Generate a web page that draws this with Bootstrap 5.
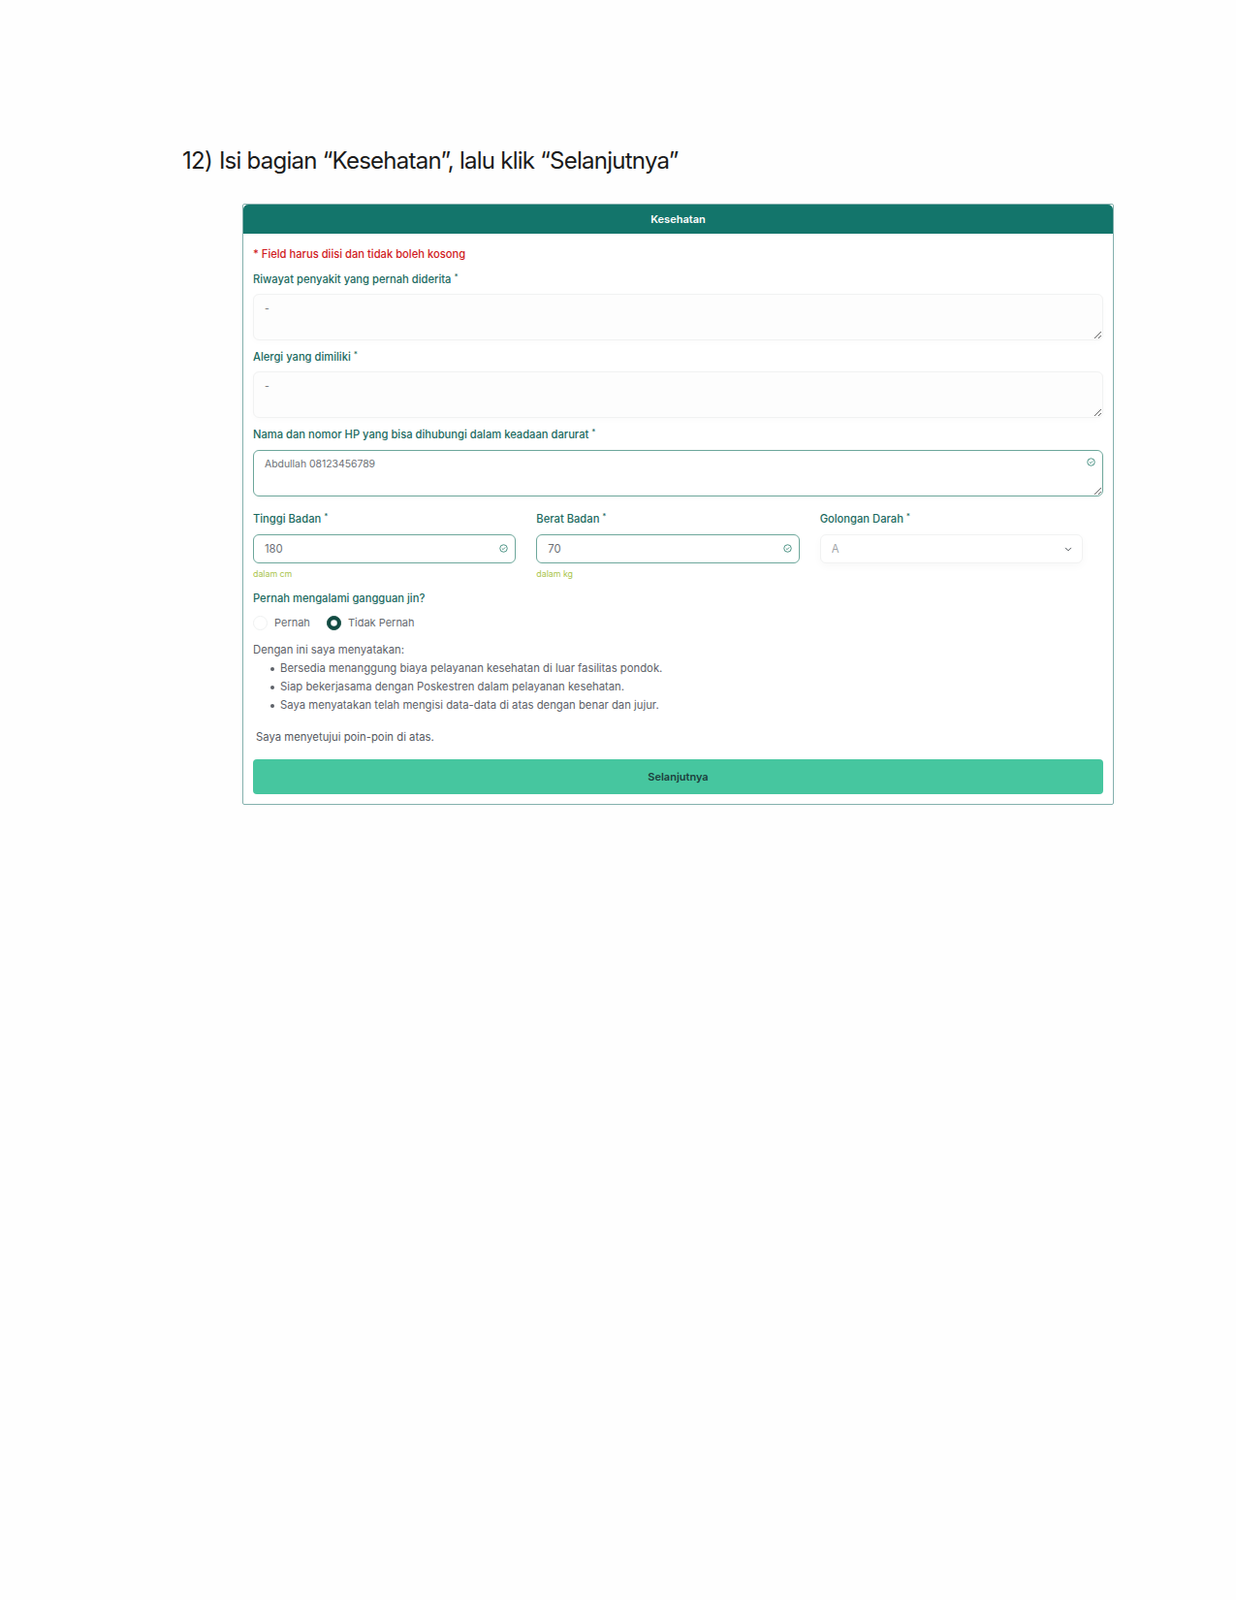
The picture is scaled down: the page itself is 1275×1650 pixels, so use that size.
<!DOCTYPE html>
<html lang="id">
<head>
<meta charset="utf-8">
<title>Kesehatan</title>
<link rel="stylesheet" href="https://cdn.jsdelivr.net/npm/bootstrap@5.3.0/dist/css/bootstrap.min.css">
<style>
body { background: #fefefe; font-family: Inter, "Liberation Sans", sans-serif; font-size: 11.3px; color: #5d6168; }
.doc-page { padding: 152px 126px 0 188px; }
.step-title { font-family: Inter, "Liberation Sans", sans-serif; font-size: 24px; line-height: 28px; font-weight: 400; color: #1a1a1a; letter-spacing: -.75px; margin: 0 0 30px; display: flex; gap: 7px; }
.form-panel { margin-left: 62px; border: 1px solid #84b0ad; border-radius: 2px; background: #fff; overflow: hidden; }
.form-panel-head { background: #13756b; color: #fff; font-weight: 600; font-size: 11px; line-height: 30px; height: 30px; text-align: center; padding: 0; border: 0; border-radius: 0; }
.form-panel-body { padding: 14px 10px 10px; }
.req-note { color: #d01a22; font-weight: 500; font-size: 11.2px; line-height: 14px; margin-bottom: 12px; }
.fld-label { color: #1b6a60; font-weight: 450; font-size: 11.2px; line-height: 14px; margin-bottom: 8px; display: block; }
.fld-label sup { font-size: 8px; top: -4px; }
.fld-label-wide { margin-bottom: 9px; }
.fld-wrap { position: relative; }
.fld-area { height: 48px; min-height: 48px; padding: 8px 11px; font-size: 10.4px; line-height: 14px; color: #6b6f75; background: #fdfdfd; border: 1px solid #f1f2f2; border-radius: 6px; box-shadow: 0 2px 6px rgba(0,0,0,.02); display: block; }
.fld-gap { margin-bottom: 10px; }
.fld-ok { border-color: #6da79b; background: #fff; padding-top: 7px; }
.fld-input { height: 30px; padding: 0 11px; font-size: 11.3px; color: #6b6f75; border-radius: 6px; }
.fld-input.fld-ok { background: #fff; padding-top: 0; }
.fld-select { height: 30px; padding: 0 11px; font-size: 11.3px; color: #a0a3a7; border: 1px solid #f1f2f2; border-radius: 6px; background-color: #fff; background-position: right 10px center; background-size: 8px 7px; box-shadow: 0 3px 8px rgba(0,0,0,.03); }
.ok-icon { position: absolute; right: 8px; top: 10px; width: 9px; height: 9px; }
.ok-icon-top { top: 8px; }
.cols-row { margin-top: 16px; }
.cols-row .fld-label { margin-bottom: 9px; }
.col-cell { padding-right: 21px; }
.help-line { color: #a9c44a; font-size: 8.8px; line-height: 11px; margin-top: 5px; }
.q-label { margin-top: 13px; margin-bottom: 10px; }
.radio-row { gap: 17px; height: 16px; line-height: 16px; margin-bottom: 13px; }
.radio-row .form-check-input { width: 15px; height: 15px; margin: 0 7px 0 0; border: 1px solid #eef0f0; background-color: #fff; float: none; flex: none; }
.radio-row .form-check-input:checked { background-color: #124b42; border-color: #124b42; }
.radio-row label { color: #666a70; font-size: 11px; }
.radio-item { display: flex; align-items: center; padding: 0; margin: 0; min-height: 0; }
.intro-line { line-height: 14px; margin-bottom: 3px; }
.point-list { margin: 0 0 16px; padding-left: 18px; line-height: 19px; list-style: none; }
.point-list li { display: flex; align-items: center; gap: 6px; }
.point-list li::before { content: ""; width: 4px; height: 4px; border-radius: 50%; background: #5d6168; flex: none; }
.agree-line { padding-left: 3px; line-height: 14px; margin-bottom: 16px; color: #55595f; }
.next-btn { background: #46c69f; border: 0; border-radius: 4px; height: 36px; font-size: 11px; font-weight: 600; color: #1c3f3c; padding: 0; display: block; }
.next-btn:hover { background: #46c69f; color: #1c3f3c; }
</style>
</head>
<body>
<main class="doc-page">
  <h1 class="step-title"><span>12)</span><span>Isi bagian “Kesehatan”, lalu klik “Selanjutnya”</span></h1>
  <section class="card form-panel">
    <div class="card-header form-panel-head">Kesehatan</div>
    <div class="card-body form-panel-body">
      <div class="req-note">* Field harus diisi dan tidak boleh kosong</div>

      <label class="fld-label" for="f1">Riwayat penyakit yang pernah diderita <sup>*</sup></label>
      <textarea id="f1" class="form-control fld-area fld-gap">-</textarea>

      <label class="fld-label" for="f2">Alergi yang dimiliki <sup>*</sup></label>
      <textarea id="f2" class="form-control fld-area fld-gap">-</textarea>

      <label class="fld-label fld-label-wide" for="f3">Nama dan nomor HP yang bisa dihubungi dalam keadaan darurat <sup>*</sup></label>
      <div class="fld-wrap">
        <textarea id="f3" class="form-control fld-area fld-ok">Abdullah 08123456789</textarea>
        <svg class="ok-icon ok-icon-top" viewBox="0 0 12 12" fill="none" stroke="#3d8a7b" stroke-width="1.2"><circle cx="6" cy="6" r="5"/><path d="M3.8 6.1 5.4 7.6 8.2 4.6"/></svg>
      </div>

      <div class="row g-0 cols-row">
        <div class="col-4 col-cell">
          <label class="fld-label" for="f4">Tinggi Badan <sup>*</sup></label>
          <div class="fld-wrap">
            <input id="f4" class="form-control fld-input fld-ok" value="180">
            <svg class="ok-icon" viewBox="0 0 12 12" fill="none" stroke="#3d8a7b" stroke-width="1.2"><circle cx="6" cy="6" r="5"/><path d="M3.8 6.1 5.4 7.6 8.2 4.6"/></svg>
          </div>
          <div class="help-line">dalam cm</div>
        </div>
        <div class="col-4 col-cell">
          <label class="fld-label" for="f5">Berat Badan <sup>*</sup></label>
          <div class="fld-wrap">
            <input id="f5" class="form-control fld-input fld-ok" value="70">
            <svg class="ok-icon" viewBox="0 0 12 12" fill="none" stroke="#3d8a7b" stroke-width="1.2"><circle cx="6" cy="6" r="5"/><path d="M3.8 6.1 5.4 7.6 8.2 4.6"/></svg>
          </div>
          <div class="help-line">dalam kg</div>
        </div>
        <div class="col-4 col-cell">
          <label class="fld-label" for="f6">Golongan Darah <sup>*</sup></label>
          <select id="f6" class="form-select fld-select"><option>A</option></select>
        </div>
      </div>

      <label class="fld-label q-label">Pernah mengalami gangguan jin?</label>
      <div class="d-flex radio-row">
        <div class="form-check radio-item"><input class="form-check-input" type="radio" name="jin" id="r1"><label for="r1">Pernah</label></div>
        <div class="form-check radio-item"><input class="form-check-input" type="radio" name="jin" id="r2" checked><label for="r2">Tidak Pernah</label></div>
      </div>

      <div class="intro-line">Dengan ini saya menyatakan:</div>
      <ul class="point-list">
        <li>Bersedia menanggung biaya pelayanan kesehatan di luar fasilitas pondok.</li>
        <li>Siap bekerjasama dengan Poskestren dalam pelayanan kesehatan.</li>
        <li>Saya menyatakan telah mengisi data-data di atas dengan benar dan jujur.</li>
      </ul>
      <div class="agree-line">Saya menyetujui poin-poin di atas.</div>
      <button type="button" class="btn w-100 next-btn">Selanjutnya</button>
    </div>
  </section>
</main>
<script src="https://cdn.jsdelivr.net/npm/bootstrap@5.3.0/dist/js/bootstrap.bundle.min.js"></script>
</body>
</html>
